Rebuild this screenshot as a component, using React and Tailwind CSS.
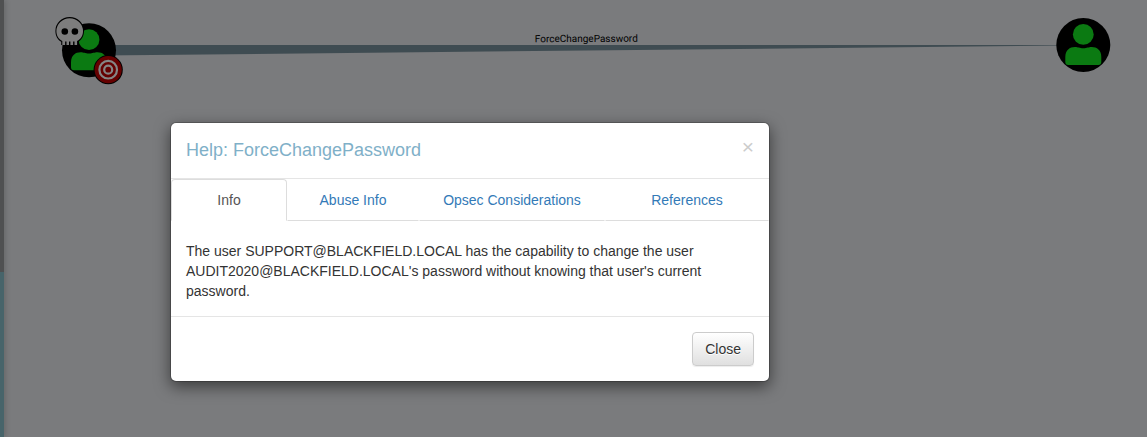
function Person() {
  return (
    <>
      <circle r="27" fill="#000" />
      <circle cy="-10.6" r="10.4" fill="#0b7a12" />
      <path d="M-18 17V12C-18 5-13.5 2-8.5 2C-5 2-4 3.2 0 3.2C4 3.2 5 2 8.5 2C13.5 2 18 5 18 12V17Q18 20 15 20H-15Q-18 20-18 17Z" fill="#0b7a12" />
    </>
  );
}

function Graph() {
  return (
    <svg className="absolute inset-0" width="1147" height="437" viewBox="0 0 1147 437">
      <path d="M100 45L1060 45L1060 45.6L100 55.5Z" fill="#3f4c52" />
      <text x="534.8" y="42" fontFamily="Roboto, sans-serif" fontSize="10" textLength="103" fill="#000" transform="rotate(-0.2 586 42)">
        ForceChangePassword
      </text>
      <g transform="translate(89 50.3)"><Person /></g>
      <g transform="translate(1083.3 45)"><Person /></g>
      <g transform="translate(69.7 31)">
        <path d="M-8.5 14V10.7C-12 8.8-14.3 5-14.3 0A14.3 14 0 0 1 14.3 0C14.3 5 12 8.8 8.5 10.7V14Z" fill="#000" />
        <path d="M-7.4 14V10C-11.2 8.2-13.3 4.5-13.3 .2A13.3 13 0 0 1 13.3 .2C13.3 4.5 11.2 8.2 7.4 10V14H4.8V10.4H3.4V14H.7V10.4H-.7V14H-3.2V10.4H-4.6V14Z" fill="#7d7d7d" />
        <circle cx="-4.9" cy=".5" r="3.3" fill="#000" />
        <circle cx="5.2" cy=".5" r="3.3" fill="#000" />
      </g>
      <g transform="translate(108.2 69.7)">
        <circle r="14.6" fill="#000" />
        <circle r="13.6" fill="#650000" />
        <circle r="8.8" fill="none" stroke="#858585" strokeWidth="2.2" />
        <circle r="4" fill="none" stroke="#858585" strokeWidth="2.2" />
      </g>
    </svg>
  );
}

export default function App() {
  return (
    <div className="relative h-[437px] w-full overflow-hidden bg-[#7a7b7d] font-['Liberation_Sans',Arial,sans-serif] text-sm leading-5 text-[#333]">
      <div className="h-full w-1 bg-[#4f5051] shadow-[0_0_6px_rgba(0,0,0,0.3)]">
        <div className="h-[272px]" />
        <div className="h-[165px] bg-[#47646a]" />
      </div>
      <Graph />
      <div role="dialog" className="absolute top-[122px] left-[170px] w-[600px] rounded-md border border-black/20 bg-white bg-clip-padding shadow-[0_5px_15px_rgba(0,0,0,0.5)]">
        <header className="flex h-14 justify-between border-b border-[#e5e5e5] px-[15px] pt-[15px]">
          <h4 className="text-lg leading-[25px] text-[#7fb0c8]">Help: ForceChangePassword</h4>
          <button className="-mt-0.5 h-[21px] text-[21px] leading-[21px] text-[#ccc]">×</button>
        </header>
        <nav className="flex h-[42px] text-center text-[#337ab7]">
          <a className="w-[116px] rounded-t border border-b-white border-[#ddd] py-2.5 text-[#555]">Info</a>
          <a className="w-[132px] rounded-t border border-transparent border-b-[#ddd] py-2.5">Abuse Info</a>
          <a className="w-[186px] rounded-t border border-transparent border-b-[#ddd] py-2.5">Opsec Considerations</a>
          <a className="w-[164px] rounded-t border border-transparent border-b-[#ddd] py-2.5">References</a>
        </nav>
        <p className="px-[15px] pt-5 pb-[15px]">
          The user SUPPORT@BLACKFIELD.LOCAL has the capability to change the user AUDIT2020@BLACKFIELD.LOCAL's password without knowing that user's current password.
        </p>
        <footer className="flex justify-end border-t border-[#e5e5e5] p-[15px]">
          <button className="rounded border border-[#ccc] bg-linear-to-b from-white to-[#e0e0e0] px-3 py-1.5 shadow-[inset_0_1px_0_rgba(255,255,255,0.15),0_1px_1px_rgba(0,0,0,0.075)] [text-shadow:0_1px_0_#fff]">Close</button>
        </footer>
      </div>
    </div>
  );
}
